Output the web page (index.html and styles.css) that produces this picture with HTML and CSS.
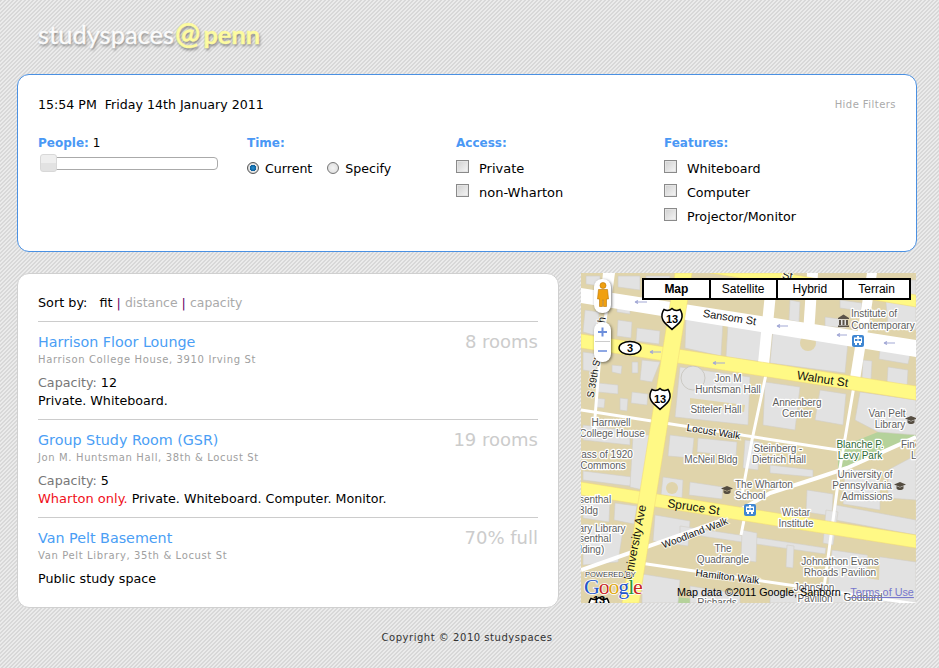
FILE: index.html
```html
<!DOCTYPE html>
<html lang="en">
<head>
<meta charset="utf-8">
<title>studyspaces@penn</title>
<link rel="stylesheet" href="styles.css">
</head>
<body>
<div class="page">
  <header class="logo"><span class="logo-a">studyspaces</span><span class="logo-at">@</span><span class="logo-b">penn</span></header>

  <section class="filters">
    <div class="now-row">
      <div class="now">15:54 PM&nbsp; Friday 14th January 2011</div>
      <a class="hide">Hide Filters</a>
    </div>
    <div class="filter-grid">
      <div>
        <div class="fhead"><b>People:</b> 1</div>
        <div class="slider"><span class="handle"></span></div>
      </div>
      <div>
        <div class="fhead"><b>Time:</b></div>
        <div class="row">
          <input class="radio" type="radio" name="t" checked><span class="rlabel">Current</span>
          <input class="radio radio2" type="radio" name="t"><span class="rlabel">Specify</span>
        </div>
      </div>
      <div>
        <div class="fhead"><b>Access:</b></div>
        <label class="row"><input class="check" type="checkbox"><span>Private</span></label>
        <label class="row"><input class="check" type="checkbox"><span>non-Wharton</span></label>
      </div>
      <div class="features">
        <div class="fhead"><b>Features:</b></div>
        <label class="row"><input class="check" type="checkbox"><span>Whiteboard</span></label>
        <label class="row"><input class="check" type="checkbox"><span>Computer</span></label>
        <label class="row"><input class="check" type="checkbox"><span>Projector/Monitor</span></label>
      </div>
    </div>
  </section>

  <main class="main">
    <section class="list">
      <div class="sort">Sort by: <span class="cur">fit</span> <i>|</i> <a>distance</a> <i>|</i> <a>capacity</a></div>
      <article class="room">
        <div class="room-top"><a class="name">Harrison Floor Lounge</a><span class="count">8 rooms</span></div>
        <div class="addr">Harrison College House, 3910 Irving St</div>
        <div class="cap"><span class="caplabel">Capacity:</span> 12</div>
        <div class="feat">Private. Whiteboard.</div>
      </article>
      <article class="room">
        <div class="room-top"><a class="name">Group Study Room (GSR)</a><span class="count">19 rooms</span></div>
        <div class="addr">Jon M. Huntsman Hall, 38th &amp; Locust St</div>
        <div class="cap"><span class="caplabel">Capacity:</span> 5</div>
        <div class="feat"><span class="red">Wharton only.</span> Private. Whiteboard. Computer. Monitor.</div>
      </article>
      <article class="room last">
        <div class="room-top"><a class="name">Van Pelt Basement</a><span class="count">70% full</span></div>
        <div class="addr">Van Pelt Library, 35th &amp; Locust St</div>
        <div class="cap">Public study space</div>
      </article>
    </section>

    <section class="map">
      <svg class="map-svg" width="335" height="330" viewBox="581 273 335 330" xmlns="http://www.w3.org/2000/svg">
        <defs>
          <path id="shield" d="M-8,-9.5C-5,-8-2,-8.5 0,-10.5C2,-8.5 5,-8 8,-9.5C10.5,-6 10.5,-3 9.5,0C8.5,4 3,7.5 0,10.5C-3,7.5-8.5,4-9.5,0C-10.5,-3-10.5,-6-8,-9.5Z"/>
          <g id="tram">
            <rect x="-6" y="-6" width="12" height="12" rx="2" fill="#3f86d2"/>
            <path d="M-4,-3.5H4V2H-4ZM-1,-5H1V-3.5H-1ZM-3,2V4H-1V2ZM1,2V4H3V2Z" fill="#fff"/>
            <path d="M-3,-2H-0.5V0H-3ZM0.5,-2H3V0H0.5Z" fill="#3f86d2"/>
          </g>
          <g id="cap">
            <path d="M0,-4L6,-1.5L0,1L-6,-1.5Z" fill="#544c40"/>
            <path d="M-3.5,0V2.5C-2,4.5 2,4.5 3.5,2.5V0L0,1.6Z" fill="#544c40"/>
          </g>
        </defs>
        <rect class="land" x="581" y="273" width="335" height="330"/>
        <polygon class="park" points="838,448 878,432 916,430 916,438 847,468 838,468"/>
        <polygon class="park" points="672,603 675,597 695,599 695,603"/>

        <g class="bld">
          <polygon points="586,276 600,276 600,286 586,284"/>
          <polygon points="618,276 640,276 640,290 618,287"/>
          <polygon points="646,276 670,276 668,294 646,290"/>
          <polygon points="617,303 630,305 630,314 617,312"/>
          <polygon points="637,303 660,306 659,314 637,311"/>
          <polygon points="618,320 632,322 631,338 617,336"/>
          <polygon points="637,328 660,331 659,344 636,341"/>
          <polygon points="585,310 599,312 598,336 583,332"/>
          <polygon points="612,365 622,366 621,374 612,372"/>
          <polygon points="632,362 638,362 638,373 632,373"/>
          <polygon points="598,383 618,385 618,394 598,392"/>
          <polygon points="583,352 598,354 596,372 583,370"/>
          <polygon points="595,398 605,399 604,408 595,407"/>
          <polygon points="620,398 628,399 627,411 620,410"/>
          <polygon points="632,392 648,394 647,405 631,403"/>
          <polygon points="642,360 660,362 652,382 640,380"/>
          <polygon points="686,316 723,322 721,356 685,348"/>
          <polygon points="728,323 765,329 763,362 726,357"/>
          <polygon points="773,330 848,342 845,373 770,363"/>
          <polygon points="680,367 750,377 748,425 675,417"/>
          <polygon points="765,382 800,387 795,430 763,425"/>
          <polygon points="820,390 846,394 843,425 815,420"/>
          <polygon points="860,392 916,400 916,435 878,432 855,420"/>
          <polygon points="790,300 800,302 799,322 789,320"/>
          <polygon points="825,317 847,320 846,328 825,326"/>
          <polygon points="772,278 800,278 796,296 772,292"/>
          <polygon points="840,300 862,303 861,311 840,308"/>
          <polygon points="884,280 916,280 916,330 888,326"/>
          <polygon points="880,350 910,355 908,364 879,359"/>
          <polygon points="888,367 908,370 907,386 887,383"/>
          <polygon points="863,360 872,361 871,380 862,378"/>
          <polygon points="583,425 630,431 630,445 583,440"/>
          <polygon points="583,471 632,477 630,486 583,480"/>
          <polygon points="633,435 650,435 643,490 630,487"/>
          <polygon points="670,435 694,438 692,458 668,456"/>
          <polygon points="698,438 737,442 736,456 697,452"/>
          <polygon points="663,477 683,480 682,498 661,495"/>
          <polygon points="690,482 723,487 722,499 689,495"/>
          <polygon points="745,440 760,442 758,470 743,468"/>
          <polygon points="770,465 813,470 813,477 770,473"/>
          <polygon points="807,490 833,494 832,516 806,512"/>
          <polygon points="836,505 916,520 916,535 835,520"/>
          <polygon points="845,470 880,470 880,510 843,504"/>
          <polygon points="888,470 916,455 916,500 888,498"/>
          <polygon points="583,496 610,500 609,522 583,518"/>
          <polygon points="615,503 637,506 634,524 614,520"/>
          <polygon points="583,524 623,530 618,562 583,565"/>
          <polygon points="655,515 690,521 688,546 653,541"/>
          <polygon points="680,526 826,548 825,554 680,533"/>
          <polygon points="742,530 757,533 756,562 741,560"/>
          <polygon points="787,545 794,546 793,568 786,567"/>
          <polygon points="642,574 680,580 678,603 642,603"/>
          <polygon points="690,586 740,594 740,603 690,603"/>
          <polygon points="770,590 830,598 830,603 770,603"/>
          <polygon points="832,550 916,562 916,603 826,603"/>
          <polygon points="826,510 838,512 833,545 823,543"/>
        </g>
        <circle class="ring" cx="693" cy="378" r="12"/>
        <circle class="tan" cx="672" cy="488" r="6"/>
        <circle class="tan" cx="808" cy="343" r="8"/>
        <polygon class="tan" points="690,398 745,405 744,412 690,406"/>
        <polygon class="tan" points="868,540 880,542 879,580 867,578"/>

        <g class="walk">
          <polyline points="608,300 600,355 594,430"/>
          <polyline points="581,410 838,450"/>
          <polyline points="768,365 752,440 741,500"/>
          <polyline points="744,520 741,535"/>
          <polyline points="855,380 840,468 822,603"/>
          <polyline points="640,563 803,587 916,604"/>
        </g>
        <polyline class="walk-wide" points="581,570 723,520 770,493 817,478 847,468 916,437"/>
        <g class="white-road">
          <polygon points="581,288 916,340 916,357 581,303"/>
          <polygon points="603,273 615,273 611,302 600,300"/>
          <polygon points="767,273 778,273 769,365 758,363"/>
          <polygon points="807,273 818,273 814,335 803,333"/>
          <polygon points="867,273 877,273 860,380 850,378"/>
        </g>
        <g class="yellow-road">
          <polygon points="783,273 916,295 916,307 710,273"/>
          <polygon points="581,334 916,386 916,400 581,348"/>
          <polygon points="581,482 916,535 916,548 581,495"/>
          <polygon points="675,273 692,273 639,603 622,603"/>
        </g>
        <g class="arrows">
          <path d="M650,352H661M650,352l3,-1.500M650,352l3,1.500"/>
          <path d="M635,302H647M635,302l3,-1.500M635,302l3,1.500"/>
          <path d="M713,363H725M713,363l3,-1.500M713,363l3,1.500"/>
          <path d="M777,326H788M777,326l3,-1.500M777,326l3,1.500"/>
          <path d="M837,335H847M837,335l3,-1.500M837,335l3,1.500"/>
          <path d="M884,343H895M884,343l3,-1.500M884,343l3,1.500"/>
        </g>

        <text class="road" x="787" y="279" transform="rotate(9 787 279)">St</text>
        <text class="road" x="605" y="322" transform="rotate(-80 605 322)">th</text>
        <text class="road" x="729" y="321" transform="rotate(9 729 321)">Sansom St</text>
        <text class="road road-lg" x="822" y="383" transform="rotate(9 822 383)">Walnut St</text>
        <text class="road road-lg" x="693" y="511" transform="rotate(9 693 511)">Spruce St</text>
        <text class="road road-lg" x="639" y="543" transform="rotate(-79 639 543)">University Ave</text>
        <text class="road road-sm" x="597" y="378" transform="rotate(-80 597 378)">S 39th St</text>
        <text class="road road-sm" x="713" y="435" transform="rotate(9 713 435)">Locust Walk</text>
        <text class="road road-sm" x="696" y="536" transform="rotate(-21 696 536)">Woodland Walk</text>
        <text class="road road-sm" x="727" y="580" transform="rotate(7 727 580)">Hamilton Walk</text>

        <text class="lbl" x="874" y="317">Institute of</text>
        <text class="lbl" x="883" y="329">Contemporary</text>
        <text class="lbl" x="728" y="382">Jon M</text>
        <text class="lbl" x="728" y="393">Huntsman Hall</text>
        <text class="lbl" x="716" y="413">Stiteler Hall</text>
        <text class="lbl" x="797" y="406">Annenberg</text>
        <text class="lbl" x="797" y="417">Center</text>
        <text class="lbl" x="887" y="417">Van Pelt</text>
        <text class="lbl" x="890" y="428">Library</text>
        <text class="lbl" x="611" y="426">Harnwell</text>
        <text class="lbl" x="612" y="437">College House</text>
        <text class="lbl" x="607" y="458">ass of 1920</text>
        <text class="lbl" x="603" y="469">Commons</text>
        <text class="lbl" x="711" y="463">McNeil Bldg</text>
        <text class="lbl" x="778" y="452">Steinberg -</text>
        <text class="lbl" x="779" y="463">Dietrich Hall</text>
        <text class="lbl lbl-start" x="735" y="488">The Wharton</text>
        <text class="lbl lbl-start" x="735" y="499">School</text>
        <text class="lbl lbl-green" x="860" y="448">Blanche P.</text>
        <text class="lbl lbl-green" x="860" y="459">Levy Park</text>
        <text class="lbl lbl-start" x="901" y="448">Fine Arts</text>
        <text class="lbl lbl-start" x="911" y="459">Library</text>
        <text class="lbl" x="865" y="478">University of</text>
        <text class="lbl" x="862" y="489">Pennsylvania</text>
        <text class="lbl" x="867" y="500">Admissions</text>
        <text class="lbl" x="796" y="516">Wistar</text>
        <text class="lbl" x="796" y="527">Institute</text>
        <text class="lbl" x="595" y="503">senthal</text>
        <text class="lbl" x="588" y="514">Bldg</text>
        <text class="lbl" x="602" y="532">ary Library</text>
        <text class="lbl" x="595" y="542">senthal</text>
        <text class="lbl" x="592" y="553">lding)</text>
        <text class="lbl" x="723" y="552">The</text>
        <text class="lbl" x="723" y="563">Quadrangle</text>
        <text class="lbl" x="840" y="565">Johnathon Evans</text>
        <text class="lbl" x="840" y="576">Rhoads Pavilion</text>
        <text class="lbl" x="814" y="591">Johnston</text>
        <text class="lbl" x="815" y="602">Pavilion</text>
        <text class="lbl" x="863" y="601">Goddard</text>
        <text class="lbl" x="717" y="606">Richards</text>

        <use href="#shield" class="shield" x="672" y="319"/>
        <text class="num" x="672" y="323">13</text>
        <use href="#shield" class="shield" x="660" y="399"/>
        <text class="num" x="660" y="403">13</text>
        <use href="#shield" class="shield" x="599" y="608"/>
        <text class="num" x="599" y="604">13</text>
        <ellipse class="oval" cx="630" cy="348" rx="11" ry="6.500"/>
        <text class="num" x="630" y="352">3</text>

        <use href="#tram" x="858" y="341"/>
        <use href="#tram" x="750" y="510"/>
        <use href="#cap" x="727" y="490"/>
        <use href="#cap" x="900" y="486"/>
        <use href="#cap" x="911" y="420"/>
        <path class="museum" d="M838,318L843.500,314.500L849,318V319H838ZM839,320H841V325H839ZM842.500,320H844.500V325H842.500ZM846,320H848V325H846ZM838,325.500H849V327H838Z"/>

        <text class="powered" x="585" y="577">POWERED BY</text>
        <text class="google" x="584" y="594"><tspan class="g-b">G</tspan><tspan class="g-r">o</tspan><tspan class="g-y">o</tspan><tspan class="g-b">g</tspan><tspan class="g-g">l</tspan><tspan class="g-r">e</tspan></text>
        <text class="copy" x="677" y="596">Map data ©2011 Google, Sanborn - <tspan class="terms">Terms of Use</tspan></text>
      </svg>

      <div class="peg">
        <svg width="12" height="25" viewBox="0 0 12 25" xmlns="http://www.w3.org/2000/svg">
          <circle cx="6" cy="3.500" r="3" fill="#f0a010" stroke="#b87400" stroke-width=".6"/>
          <path d="M1.500,7.500H10.500L11.500,17H9.500V24.500H6.500V18H5.500V24.500H2.500V17H.5Z" fill="#f0a010" stroke="#b87400" stroke-width=".6"/>
        </svg>
      </div>
      <div class="zoom">
        <svg width="17" height="40" viewBox="0 0 17 40" xmlns="http://www.w3.org/2000/svg">
          <path d="M4,10H13M8.500,5.500V14.500" stroke="#6c8edb" stroke-width="2" fill="none"/>
          <path d="M1,19.500H16" stroke="#ccc" fill="none"/>
          <path d="M4,29H13" stroke="#8ea8e4" stroke-width="2" fill="none"/>
        </svg>
      </div>
      <div class="maptypes">
        <span class="on">Map</span><span>Satellite</span><span>Hybrid</span><span>Terrain</span>
      </div>
    </section>
  </main>

  <footer class="foot">Copyright © 2010 studyspaces</footer>
</div>
</body>
</html>
```
FILE: styles.css
```css
* { box-sizing: border-box; }
html, body { margin: 0; padding: 0; }
body {
  height: 668px;
  overflow: hidden;
  font-family: "DejaVu Sans", Verdana, sans-serif;
  font-size: 13px;
  color: #000;
  background-color: #e2e2e2;
  background-image: linear-gradient(135deg, #d8d8d8 25%, #ebebeb 25%, #ebebeb 50%, #d8d8d8 50%, #d8d8d8 75%, #ebebeb 75%);
  background-size: 4px 4px;
}
.page { width: 900px; margin-left: 17px; }

.logo {
  height: 74px;
  padding: 16px 0 0 21px;
  font-family: "Lato", sans-serif;
  font-size: 25.500px;
  line-height: 36px;
  -webkit-text-stroke: .35px currentColor;
  text-shadow: 1px 2px 3px rgba(0,0,0,.45);
  white-space: nowrap;
}
.logo-a { color: #fbfbfb; }
.logo-at { color: #fdfba0; font-size: 30px; font-weight: 700; line-height: 20px; margin-left: 1px; }
.logo-b { color: #fdfba0; font-weight: 700; margin-left: 3px; }

.filters {
  height: 178px;
  background: #fff;
  border: 1px solid #4a90e2;
  border-radius: 12px;
  padding: 22px 20px 0;
}
.now-row { display: flex; justify-content: space-between; align-items: center; height: 16px; line-height: 16px; }
.now { font-size: 12.600px; }
.hide { font-size: 10px; letter-spacing: .45px; color: #aaa; }
.filter-grid { display: grid; grid-template-columns: 209px 209px 208px 209px; margin-top: 22px; }
.fhead { height: 16px; line-height: 16px; margin-bottom: 5px; font-size: 12px; }
.fhead b { color: #4a98f5; }
.row { display: flex; align-items: center; height: 24px; font-size: 13px; }
.features .row { font-size: 12.700px; }
.slider {
  position: relative;
  width: 178px;
  height: 13px;
  margin: 6px 0 0 2px;
  border: 1px solid #aaa;
  border-radius: 4px;
  background: #fff;
}
.handle {
  position: absolute;
  left: -1px;
  top: -4px;
  width: 17px;
  height: 18px;
  border: 1px solid #d8d8d8;
  border-radius: 3px;
  background: linear-gradient(#eee 50%, #e2e2e2 50%);
}
.check, .radio { appearance: none; -webkit-appearance: none; margin: 0; flex: none; }
.check {
  width: 13px;
  height: 13px;
  margin: -3px 10px 0 0;
  border: 1px solid #8a8a8a;
  box-shadow: inset 0 0 0 1px #e4e4e4;
  background: linear-gradient(135deg, #cfcfcf, #f6f6f6);
}
.radio {
  width: 12px;
  height: 12px;
  margin: -1px 6px 0 0;
  border-radius: 50%;
  border: 1px solid #777;
  background: radial-gradient(circle, #f4f4f4 0, #e4e4e4 60%, #c8c8c8 100%);
}
.radio:checked {
  background: radial-gradient(circle, #2a90d0 0, #0c5f9c 42%, #e8e8e8 50%, #bbb 100%);
  border-color: #555;
}
.radio2 { margin-left: 15px; }
.rlabel { font-size: 12.600px; }

.main { display: flex; gap: 22px; align-items: flex-start; margin-top: 21px; }
.list {
  width: 542px;
  height: 335px;
  background: #fff;
  border: 1px solid #d0d0d0;
  border-radius: 12px;
  padding: 21px 20px 0;
}
.sort {
  height: 27px;
  line-height: 16px;
  border-bottom: 1px solid #ccc;
  font-size: 12.800px;
  white-space: nowrap;
}
.sort .cur { margin-left: 8px; }
.sort i { font-style: normal; color: #606; }
.sort a { color: #aaa; font-size: 12.400px; }
.room { height: 98px; padding-top: 11px; border-bottom: 1px solid #ccc; }
.room.last { border-bottom: 0; height: auto; }
.room-top { display: flex; justify-content: space-between; align-items: center; height: 18px; line-height: 18px; }
.name { font-size: 14.300px; color: #4a9ef5; }
.count { font-size: 18px; color: #ccc; }
.addr { height: 14px; line-height: 14px; margin-top: 2px; font-size: 10px; letter-spacing: .63px; color: #a0a0a0; }
.cap { height: 18px; line-height: 18px; margin-top: 7px; font-size: 12.700px; }
.caplabel { color: #777; }
.feat { height: 18px; line-height: 18px; font-size: 12.700px; }
.red { color: #f01020; font-size: 13px; }

.map { position: relative; width: 335px; height: 330px; }
.map-svg { display: block; }
.land { fill: #e0d4ab; }
.park { fill: #b5d29b; }
.bld polygon { fill: #e2e2e2; stroke: #d2cfc6; stroke-width: .6; }
.ring { fill: #e2e2e2; stroke: #cbc9c3; }
.tan { fill: #e0d4ab; }
.walk polyline { fill: none; stroke: #fff; stroke-width: 3; }
.walk-wide { fill: none; stroke: #fff; stroke-width: 4; }
.white-road polygon { fill: #fff; }
.yellow-road polygon { fill: #fff985; stroke: #f0d878; stroke-width: .5; }
.arrows path { fill: none; stroke: #a3a9d6; stroke-width: 1.100; }
.road {
  font-family: "Liberation Sans", Arial, sans-serif;
  font-size: 11px;
  fill: #111;
  stroke: #fff;
  stroke-width: 2;
  stroke-opacity: .7;
  paint-order: stroke;
  text-anchor: middle;
}
.road-lg { font-size: 12px; stroke: none; }
.road-sm { font-size: 10px; }
.lbl {
  font-family: "Liberation Sans", Arial, sans-serif;
  font-size: 10px;
  fill: #5e5e5e;
  stroke: #fff;
  stroke-width: 2.500;
  stroke-linejoin: round;
  paint-order: stroke;
  text-anchor: middle;
}
.lbl-start { text-anchor: start; }
.lbl-green { fill: #2c6a36; }
.shield { fill: #fff; stroke: #000; stroke-width: 1.500; }
.oval { fill: #fff; stroke: #000; stroke-width: 1.400; }
.num {
  font-family: "Liberation Sans", Arial, sans-serif;
  font-size: 11px;
  font-weight: 700;
  fill: #000;
  text-anchor: middle;
}
.museum { fill: #5b5348; }
.powered {
  font-family: "Liberation Sans", Arial, sans-serif;
  font-size: 7.500px;
  fill: #444;
  stroke: #fff;
  stroke-width: 1.500;
  paint-order: stroke;
}
.google {
  font-family: "Liberation Serif", serif;
  font-size: 22px;
  letter-spacing: -1.200px;
  stroke: #fff;
  stroke-width: 1.500;
  paint-order: stroke;
}
.g-b { fill: #2456c8; }
.g-r { fill: #c8281e; }
.g-y { fill: #e0a810; }
.g-g { fill: #2c9a3a; }
.copy { font-family: "Liberation Sans", Arial, sans-serif; font-size: 10.800px; fill: #000; }
.terms { fill: #7777cc; text-decoration: underline; }

.peg {
  position: absolute;
  left: 13px;
  top: 6px;
  width: 17px;
  height: 34px;
  padding: 3px 0 0 3px;
  background: #fff;
  border-radius: 8px;
  box-shadow: 1px 1px 3px rgba(0,0,0,.5);
}
.peg svg { display: block; }
.zoom {
  position: absolute;
  left: 13px;
  top: 49px;
  width: 17px;
  height: 40px;
  background: #fff;
  border-radius: 8px;
  box-shadow: 1px 1px 3px rgba(0,0,0,.5);
}
.zoom svg { display: block; }
.maptypes {
  position: absolute;
  left: 61px;
  top: 5px;
  display: flex;
  width: 269px;
  height: 22px;
  background: #fff;
  border: 2px solid #000;
}
.maptypes span {
  flex: 1;
  text-align: center;
  font-family: "Liberation Sans", Arial, sans-serif;
  font-size: 12px;
  line-height: 19px;
  border-left: 2px solid #000;
}
.maptypes span:first-child { border-left: 0; }
.maptypes .on { font-weight: 700; }

.foot {
  height: 38px;
  padding-top: 22px;
  line-height: 16px;
  font-size: 10px;
  letter-spacing: .53px;
  color: #333;
  text-align: center;
}
```
